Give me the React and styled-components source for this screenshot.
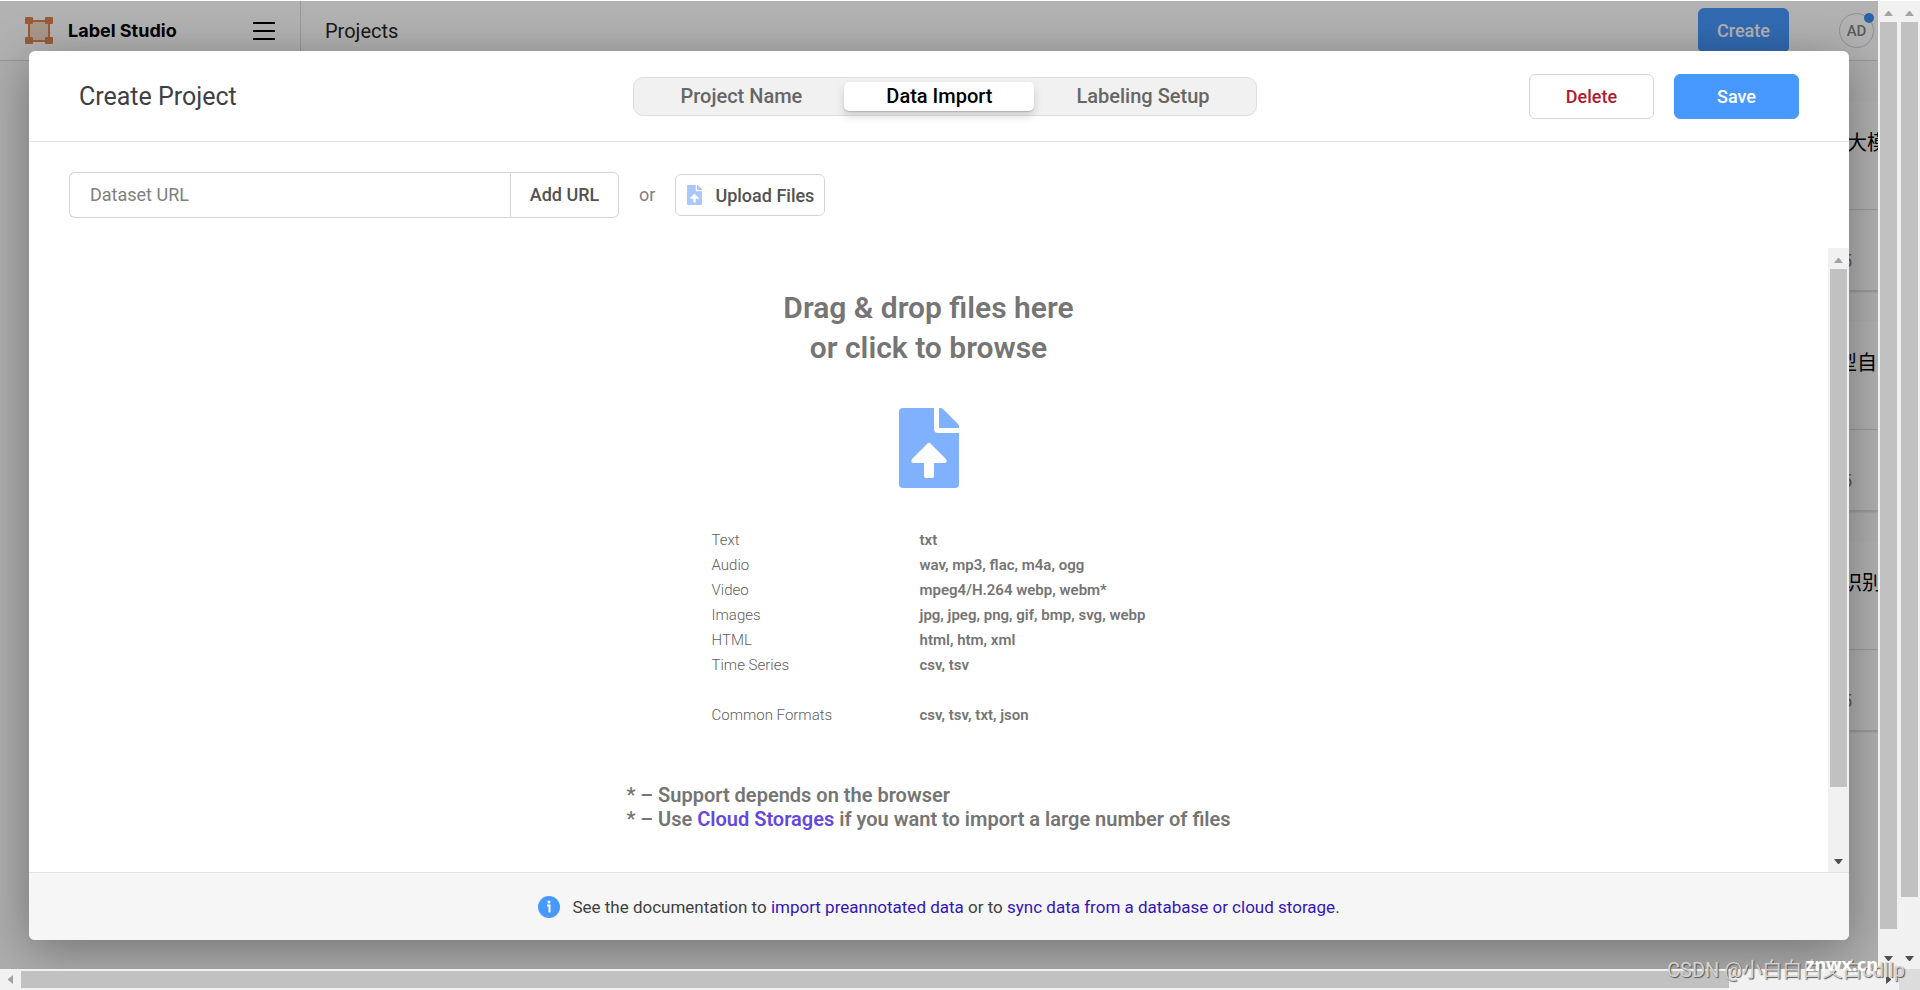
import React from "react";
import styled, { createGlobalStyle, css } from "styled-components";

const GlobalStyle = createGlobalStyle`
  *, *::before, *::after { box-sizing: border-box; }
  body {
    margin: 0;
    background: #fff;
    color: #000;
    font-family: Roboto, "Noto Sans CJK SC", sans-serif;
    font-size: 18px;
  }
  button, input { font-family: inherit; }
  a { text-decoration: none; }
`;

const Frame = styled.div`
  position: relative;
  display: grid;
  grid-template-columns: minmax(0, 1fr) 21px 21px;
  grid-template-rows: minmax(0, 1fr) 21px;
  height: 100vh;
  padding-top: 1px;
  overflow: hidden;
`;

const Page = styled.div`
  position: relative;
  overflow: hidden;
  background: #fafafa;
`;

const TopBar = styled.header`
  display: flex;
  align-items: center;
  height: 60px;
  padding-right: 4px;
  background: #fff;
  border-bottom: 1px solid #d9d9d9;
`;

const Brand = styled.div`
  display: flex;
  align-items: center;
  justify-content: space-between;
  align-self: stretch;
  width: 301px;
  padding: 0 25px;
  border-right: 1px solid #dcdcdc;
`;

const BrandLink = styled.a`
  display: flex;
  align-items: center;
  gap: 15px;
  color: #000;
  font: 700 18px Inter, sans-serif;
`;

const MenuButton = styled.button`
  display: flex;
  padding: 0;
  border: 0;
  background: none;
`;

const Crumb = styled.a`
  flex: 1;
  padding-left: 24px;
  color: #262626;
  font-size: 20px;
`;

const Button = styled.button`
  min-width: ${(p) => (p.$compact ? "91px" : "125px")};
  height: 45px;
  padding: 0;
  border: 1px solid #d5d5d5;
  border-radius: 6px;
  background: #fff;
  color: #b01a32;
  font-size: 18px;
  font-weight: 500;
  ${(p) =>
    p.$primary &&
    css`
      border-color: #4899ff;
      background: #4899ff;
      color: #fff;
    `}
`;

const Avatar = styled.div`
  position: relative;
  display: grid;
  place-items: center;
  width: 35px;
  height: 35px;
  margin-left: 50px;
  border: 1px solid #d0d0d0;
  border-radius: 50%;
  color: #858585;
  font-size: 15px;
  font-weight: 500;
`;

const AvatarDot = styled.i`
  position: absolute;
  top: -1px;
  right: -1px;
  width: 10px;
  height: 10px;
  border-radius: 50%;
  background: #3d8bf0;
`;

const CardList = styled.div`
  display: flex;
  flex-direction: column;
  align-items: flex-end;
  gap: 30px;
  padding-top: 40px;
`;

const Card = styled.article`
  width: 410px;
  height: 190px;
  border-bottom: 1px solid #ddd;
  box-shadow: 0 1px 2px rgba(0, 0, 0, 0.15);
  background: #fcfcfc;
`;

const CardTitle = styled.div`
  height: 109px;
  padding: 27px 0 0 369px;
  border-bottom: 1px solid #ddd;
  font-size: 20px;
  line-height: 30px;
  white-space: pre;
  overflow: hidden;
`;

const CardDate = styled.div`
  padding: 39px 0 0 374px;
  color: #808080;
  font-size: 18px;
  line-height: 24px;
`;

const Backdrop = styled.div`
  position: absolute;
  inset: 0;
  display: flex;
  padding: 50px 29px 29px;
  background: rgba(0, 0, 0, 0.3);
`;

const Modal = styled.section`
  display: flex;
  flex: 1;
  flex-direction: column;
  min-width: 0;
  border-radius: 6px;
  background: #fff;
  box-shadow: 0 10px 50px rgba(0, 0, 0, 0.35);
  overflow: hidden;
`;

const ModalHeader = styled.header`
  display: grid;
  grid-template-columns: 1fr auto 1fr;
  align-items: center;
  height: 91px;
  padding: 0 50px;
  border-bottom: 1px solid #e6e6e6;
`;

const ModalTitle = styled.h1`
  margin: 0;
  color: #3e4047;
  font-size: 25px;
  font-weight: 400;
`;

const Steps = styled.nav`
  display: flex;
  height: 39px;
  margin-left: 12px;
  padding: 4px;
  border: 1px solid #dedede;
  border-radius: 10px;
  background: #f1f1f1;
`;

const Step = styled.button`
  padding: 0 42px;
  border: 0;
  border-radius: 5px;
  background: none;
  color: #666;
  font-size: 20px;
  font-weight: 500;
  ${(p) =>
    p.$active &&
    css`
      background: #fff;
      color: #000;
      box-shadow: 0 1px 1px rgba(0, 0, 0, 0.16), 0 5px 10px rgba(0, 0, 0, 0.15);
    `}
`;

const Actions = styled.div`
  display: flex;
  justify-content: flex-end;
  gap: 20px;
`;

const ImportBar = styled.form`
  display: flex;
  align-items: center;
  height: 106px;
  padding: 0 40px;
`;

const UrlInput = styled.input`
  width: 441px;
  height: 46px;
  padding: 0 20px 2px;
  border: 1px solid #d5d5d5;
  border-right: 0;
  border-radius: 6px 0 0 6px;
  outline: 0;
  font-size: 18px;
  &::placeholder { color: #808080; opacity: 1; }
`;

const AddUrl = styled.button`
  width: 109px;
  height: 46px;
  padding: 0 0 2px;
  border: 1px solid #d5d5d5;
  border-radius: 0 6px 6px 0;
  background: #fff;
  color: #525252;
  font-size: 18px;
  font-weight: 500;
`;

const Or = styled.span`
  padding: 0 20px 2px;
  color: #808080;
`;

const Upload = styled.button`
  display: flex;
  align-items: center;
  gap: 12px;
  height: 42px;
  padding: 0 10px;
  border: 1px solid #d5d5d5;
  border-radius: 6px;
  background: #fff;
  color: #525252;
  font-size: 18px;
  font-weight: 500;
`;

const ScrollArea = styled.div`
  display: flex;
  flex: 1;
  min-height: 0;
`;

const DropZone = styled.main`
  display: flex;
  flex: 1;
  flex-direction: column;
  align-items: center;
  padding-top: 40px;
  color: #757575;
`;

const DropTitle = styled.h2`
  margin: 0 0 40px;
  font-size: 30px;
  font-weight: 600;
  line-height: 40px;
  text-align: center;
`;

const Formats = styled.table`
  margin-top: 40px;
  border-collapse: collapse;
  font-size: 15px;
  line-height: 25px;
  text-align: left;
  white-space: nowrap;
  th, td { padding: 0; }
  th { width: 208px; font-weight: 300; color: #606060; }
  td { font-weight: 600; }
  tr:last-child > * { padding-top: 25px; }
`;

const Notes = styled.p`
  margin: 55px 0 0;
  font-size: 20px;
  font-weight: 600;
  line-height: 24px;
  a { color: #6448e0; }
`;

const ModalFooter = styled.footer`
  display: flex;
  align-items: center;
  justify-content: center;
  gap: 12px;
  height: 68px;
  border-top: 1px solid #e4e4e4;
  background: #f6f6f6;
  color: #404040;
  font-size: 17px;
  a { color: #3415b8; }
`;

const Track = styled.div`
  display: flex;
  flex-direction: ${(p) => (p.$horizontal ? "row" : "column")};
  grid-column: ${(p) => (p.$horizontal ? "1 / 3" : "auto")};
  flex: none;
  min-width: 21px;
  background: #f1f1f1;
`;

const ThumbLane = styled.div`
  display: flex;
  flex: 1;
  flex-direction: inherit;
  padding: ${(p) => (p.$horizontal ? "2px 0" : "0 2px")};
`;

const Thumb = styled.div`
  flex: 0 0 ${(p) => p.$size};
  background: #c1c1c1;
`;

const Corner = styled.div`
  background: #dcdcdc;
`;

const ArrowSvg = styled.svg`
  display: block;
  flex: none;
`;

const Watermark = styled.div`
  position: absolute;
  right: 15px;
  bottom: 6px;
  color: #d2d2d2;
  font-size: 20px;
  line-height: 28px;
  text-shadow: 1px 1px 1px #555;
  white-space: nowrap;
`;

const SiteMark = styled.div`
  position: absolute;
  right: 42px;
  bottom: 14px;
  color: #fff;
  font: 700 18px/24px "Noto Sans", sans-serif;
`;

const ARROWS = {
  up: "M6 15h9l-4-5h-1z",
  down: "M6 8h9l-4 5h-1z",
  left: "M13 6v9l-5-4v-1z",
  right: "M8 6v9l5-4v-1z",
};

function Arrow({ dir, dim }) {
  return (
    <ArrowSvg width="21" height="21" aria-hidden="true">
      <path d={ARROWS[dir]} fill={dim ? "#a3a3a3" : "#505050"} />
    </ArrowSvg>
  );
}

function Scrollbar({ horizontal, size }) {
  return (
    <Track $horizontal={horizontal}>
      <Arrow dir={horizontal ? "left" : "up"} dim />
      <ThumbLane $horizontal={horizontal}>
        <Thumb $size={size} />
      </ThumbLane>
      <Arrow dir={horizontal ? "right" : "down"} />
    </Track>
  );
}

function LogoIcon() {
  return (
    <svg width="28" height="28" viewBox="0 0 28 28" aria-hidden="true">
      <rect x="4" y="4" width="20" height="20" fill="#f3d9c6" />
      <path d="M4 4h20v20H4z" fill="none" stroke="#dc8350" strokeWidth="2" />
      <g fill="#dc8350">
        <rect width="8" height="7" rx="1" />
        <rect x="20" width="8" height="7" rx="1" />
        <rect y="20" width="8" height="7" rx="1" />
        <rect x="20" y="20" width="8" height="7" rx="1" />
      </g>
    </svg>
  );
}

function FileIcon({ width, height, color }) {
  return (
    <svg width={width} height={height} viewBox="0 0 60 80" aria-hidden="true">
      <path
        fill={color}
        fillRule="evenodd"
        d="M4 0H35V21Q35 25 39 25H60V76Q60 80 56 80H4Q0 80 0 76V4Q0 0 4 0ZM28.500 35.500 13 51Q11 55 15 55H25V68Q25 70 27 70H33Q35 70 35 68V55H45Q49 55 47 51L31.500 35.500Q30 34 28.500 35.500Z"
      />
      <path fill={color} d="M40 0H41Q43 0 44 1L59 16Q60 17 60 19V20H40Z" />
    </svg>
  );
}

function InfoIcon() {
  return (
    <svg width="22" height="22" viewBox="0 0 22 22" aria-hidden="true">
      <circle cx="11" cy="11" r="11" fill="#4899ff" />
      <circle cx="11" cy="6" r="1.500" fill="#fff" />
      <path d="M9 9.500h2.500v7" fill="none" stroke="#fff" strokeWidth="2" />
    </svg>
  );
}

const CARDS = ["  大模型", "型自动", " 识别"];

const FORMATS = [
  ["Text", "txt"],
  ["Audio", "wav, mp3, flac, m4a, ogg"],
  ["Video", "mpeg4/H.264 webp, webm*"],
  ["Images", "jpg, jpeg, png, gif, bmp, svg, webp"],
  ["HTML", "html, htm, xml"],
  ["Time Series", "csv, tsv"],
  ["Common Formats", "csv, tsv, txt, json"],
];

export default function App() {
  return (
    <>
      <GlobalStyle />
      <Frame>
        <Page>
          <TopBar>
            <Brand>
              <BrandLink href="#">
                <LogoIcon />
                Label Studio
              </BrandLink>
              <MenuButton type="button" aria-label="Menu">
                <svg width="22" height="18" aria-hidden="true">
                  <path d="M0 1h22M0 9h22M0 17h22" stroke="#000" strokeWidth="2" />
                </svg>
              </MenuButton>
            </Brand>
            <Crumb href="#">Projects</Crumb>
            <Button type="button" $primary $compact>Create</Button>
            <Avatar>
              AD
              <AvatarDot />
            </Avatar>
          </TopBar>
          <CardList>
            {CARDS.map((title) => (
              <Card key={title}>
                <CardTitle>{title}</CardTitle>
                <CardDate>5</CardDate>
              </Card>
            ))}
          </CardList>

          <Backdrop>
            <Modal role="dialog" aria-labelledby="modal-title">
              <ModalHeader>
                <ModalTitle id="modal-title">Create Project</ModalTitle>
                <Steps>
                  <Step type="button">Project Name</Step>
                  <Step type="button" $active aria-current="step">Data Import</Step>
                  <Step type="button">Labeling Setup</Step>
                </Steps>
                <Actions>
                  <Button type="button">Delete</Button>
                  <Button type="button" $primary>Save</Button>
                </Actions>
              </ModalHeader>

              <ImportBar onSubmit={(e) => e.preventDefault()}>
                <UrlInput placeholder="Dataset URL" aria-label="Dataset URL" />
                <AddUrl type="submit">Add URL</AddUrl>
                <Or>or</Or>
                <Upload type="button">
                  <FileIcon width="17" height="20" color="#a9c8ff" />
                  Upload Files
                </Upload>
              </ImportBar>

              <ScrollArea>
                <DropZone>
                  <DropTitle>
                    Drag &amp; drop files here
                    <br />
                    or click to browse
                  </DropTitle>
                  <FileIcon width="60" height="80" color="#7fb1ff" />
                  <Formats>
                    <tbody>
                      {FORMATS.map(([label, value]) => (
                        <tr key={label}>
                          <th scope="row">{label}</th>
                          <td>{value}</td>
                        </tr>
                      ))}
                    </tbody>
                  </Formats>
                  <Notes>
                    * – Support depends on the browser
                    <br />* – Use <a href="#">Cloud Storages</a> if you want to import a large number
                    of files
                  </Notes>
                </DropZone>
                <Scrollbar size="89%" />
              </ScrollArea>

              <ModalFooter>
                <InfoIcon />
                <span>
                  See the documentation to <a href="#">import preannotated data</a> or to{" "}
                  <a href="#">sync data from a database or cloud storage</a>.
                </span>
              </ModalFooter>
            </Modal>
          </Backdrop>
        </Page>
        <Scrollbar size="98%" />
        <Scrollbar size="94.500%" />
        <Scrollbar horizontal size="92%" />
        <Corner />
        <Watermark>CSDN @小白白白又白cdllp</Watermark>
        <SiteMark>znwx.cn</SiteMark>
      </Frame>
    </>
  );
}
